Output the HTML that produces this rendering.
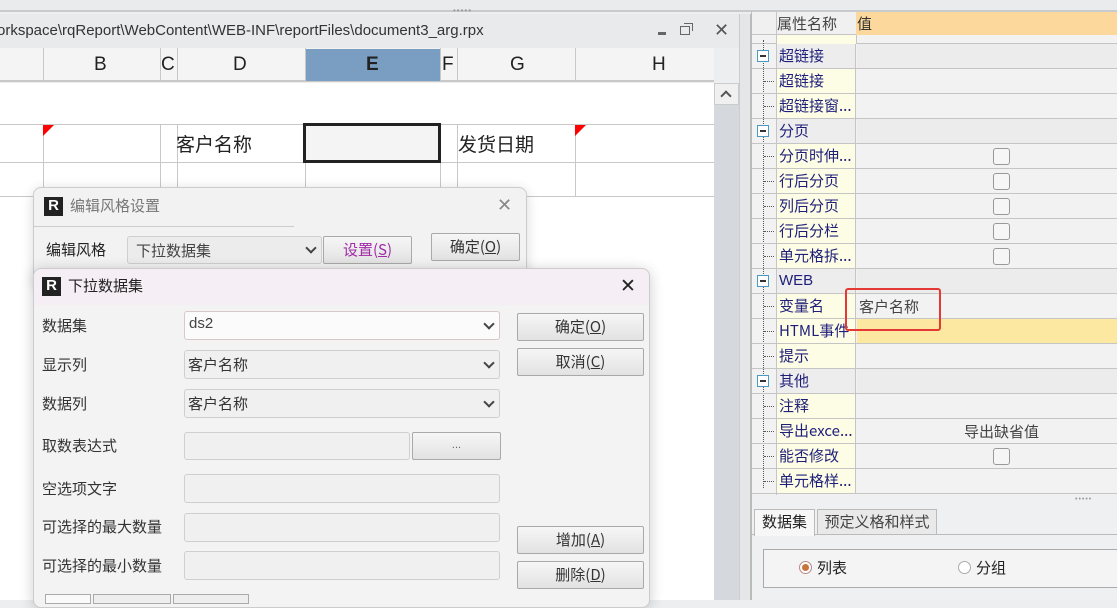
<!DOCTYPE html>
<html><head><meta charset="utf-8"><style>
*{box-sizing:border-box;margin:0;padding:0}
body{width:1117px;height:600px;overflow:hidden;position:relative;background:#eceef0;font-family:"Liberation Sans","Noto Sans CJK SC",sans-serif;font-size:15px;color:#222}
.a{position:absolute}
.cj{font-family:"Noto Sans CJK SC","WenQuanYi Zen Hei",sans-serif}
.vl{position:absolute;width:1px;background:#c8c8c8}
.hl{position:absolute;height:1px;background:#c8c8c8}
.btn{position:absolute;border:1px solid #a9a9a9;border-radius:2px;background:linear-gradient(#f6f6f6,#e2e2e2);text-align:center;font-size:15px;color:#333}
.inp{position:absolute;border:1px solid #cfcfcf;border-radius:3px;background:#f0f0f0}
.lbl{position:absolute;left:42px;font-size:15px;color:#333}
.chev{position:absolute;right:6px;top:8px;width:8px;height:8px;border-right:2px solid #444;border-bottom:2px solid #444;transform:rotate(45deg)}
.pr{position:absolute;left:752px;width:365px;height:25px;border-bottom:1px solid #c5c5c5}
.pr .n{position:absolute;left:24px;width:80px;top:0;height:24px;border-left:1px solid #c5c5c5;border-right:1px solid #c5c5c5;padding-left:2px;line-height:24px;color:#1f1f7a;font-size:15px;white-space:nowrap;overflow:hidden}
.pr .v{position:absolute;left:105px;right:0;top:0;height:24px;background:#f2f2f2}
.pr.c .n{background:#fdfde6}
.pr.g .n{background:#ededed}
.cb{position:absolute;left:136px;top:4px;width:17px;height:17px;border:1px solid #999;border-radius:3px;background:#f6f6f6}
.tr{position:absolute;left:12px;top:12px;width:10px;border-top:1px dotted #555}
.exp{position:absolute;left:5px;top:6px;width:12px;height:12px;border:1px solid #4a9ac2;background:#fff}
.exp:after{content:"";position:absolute;left:2px;top:4px;width:6px;height:2px;background:#333}
.logo{position:absolute;width:19px;height:19px;background:#222;color:#fff;font-weight:bold;font-size:15px;line-height:17px;text-align:center;font-family:"Liberation Sans",sans-serif}
</style></head><body>
<div class="a" style="left:0;top:0;width:1117px;height:12px;background:#e9ebed;border-bottom:2px solid #c8cbce"></div>
<div class="a" style="left:453px;top:6px;font-size:8px;color:#999;letter-spacing:1px">•••••</div>
<div class="a" style="left:0;top:14px;width:740px;height:34px;background:#e9eaec"></div>
<div class="a" style="left:-3px;top:22px;font-size:15px;color:#333;white-space:nowrap">orkspace\rqReport\WebContent\WEB-INF\reportFiles\document3_arg.rpx</div>
<div class="a" style="left:658px;top:32px;width:8px;height:3px;background:#666"></div>
<div class="a" style="left:680px;top:26px;width:10px;height:9px;border:1.5px solid #666"></div>
<div class="a" style="left:684px;top:23px;width:9px;height:8px;border-top:1.5px solid #666;border-right:1.5px solid #666"></div>
<div class="a" style="left:714px;top:20px;font-size:18px;color:#555">✕</div>
<div class="a" style="left:0;top:48px;width:714px;height:34px;background:#f4f4f4;border-bottom:2px solid #c8c8c8"></div>
<div class="a" style="left:306px;top:49px;width:134px;height:32px;background:#7a9ec2"></div>
<div class="vl" style="left:43px;top:48px;height:34px"></div>
<div class="vl" style="left:160px;top:48px;height:34px"></div>
<div class="vl" style="left:177px;top:48px;height:34px"></div>
<div class="vl" style="left:305px;top:48px;height:34px"></div>
<div class="vl" style="left:440px;top:48px;height:34px"></div>
<div class="vl" style="left:457px;top:48px;height:34px"></div>
<div class="vl" style="left:575px;top:48px;height:34px"></div>
<div class="a" style="left:94px;top:54px;font-size:19px">B</div>
<div class="a" style="left:161px;top:54px;font-size:19px">C</div>
<div class="a" style="left:233px;top:54px;font-size:19px">D</div>
<div class="a" style="left:366px;top:54px;font-size:19px;font-weight:bold">E</div>
<div class="a" style="left:442px;top:54px;font-size:19px">F</div>
<div class="a" style="left:510px;top:54px;font-size:19px">G</div>
<div class="a" style="left:652px;top:54px;font-size:19px">H</div>
<div class="a" style="left:0;top:83px;width:714px;height:517px;background:#fff"></div>
<div class="hl" style="left:0;top:124px;width:714px"></div>
<div class="hl" style="left:0;top:162px;width:714px"></div>
<div class="hl" style="left:0;top:196px;width:714px"></div>
<div class="vl" style="left:43px;top:124px;height:72px"></div>
<div class="vl" style="left:160px;top:124px;height:72px"></div>
<div class="vl" style="left:177px;top:124px;height:72px"></div>
<div class="vl" style="left:305px;top:124px;height:72px"></div>
<div class="vl" style="left:440px;top:124px;height:72px"></div>
<div class="vl" style="left:457px;top:124px;height:72px"></div>
<div class="vl" style="left:575px;top:124px;height:72px"></div>
<div class="a" style="left:43px;top:125px;width:0;height:0;border-top:11px solid #f00;border-right:11px solid transparent"></div>
<div class="a" style="left:575px;top:125px;width:0;height:0;border-top:11px solid #f00;border-right:11px solid transparent"></div>
<div class="a" style="left:303px;top:123px;width:138px;height:40px;border:3px solid #222;background:#f4f4f4"></div>
<div class="a cj" style="left:176px;top:130px;font-size:19px">客户名称</div>
<div class="a cj" style="left:458px;top:130px;font-size:19px">发货日期</div>
<div class="a" style="left:714px;top:83px;width:25px;height:517px;background:#d5d9dd"></div>
<div class="a" style="left:714px;top:83px;width:25px;height:22px;background:#f0f0f0;border:1px solid #ccc"></div>
<div class="a" style="left:722px;top:92px;width:8px;height:8px;border-left:2px solid #555;border-top:2px solid #555;transform:rotate(45deg)"></div>
<div class="a" style="left:739px;top:14px;width:12px;height:586px;background:#e4e6e8;border-left:1px solid #ccc;border-right:1px solid #bbb"></div>
<div class="a" style="left:33px;top:187px;width:494px;height:100px;background:#f2f2f2;border:1px solid #ccc;border-radius:8px;box-shadow:0 2px 12px rgba(0,0,0,.15)"></div>
<div class="logo" style="left:44px;top:197px">R</div>
<div class="a cj" style="left:70px;top:195px;font-size:15px;color:#777">编辑风格设置</div>
<div class="a" style="left:497px;top:195px;font-size:18px;color:#888">✕</div>
<div class="a" style="left:34px;top:226px;width:260px;height:0;border-top:1px solid #ccc"></div>
<div class="a cj" style="left:46px;top:239px;font-size:15px">编辑风格</div>
<div class="inp" style="left:127px;top:236px;width:195px;height:28px;background:#ececec"><span class="cj" style="position:absolute;left:8px;top:3px;font-size:15px;color:#444">下拉数据集</span><div class="chev" style="top:7px"></div></div>
<div class="btn cj" style="left:323px;top:236px;width:89px;height:28px;line-height:26px;color:#a02aa8">设置(<u>S</u>)</div>
<div class="btn cj" style="left:431px;top:233px;width:89px;height:28px;line-height:26px">确定(<u>O</u>)</div>
<div class="a" style="left:33px;top:268px;width:617px;height:340px;background:#f3f3f3;border:1px solid #ccc;border-radius:8px;box-shadow:0 2px 14px rgba(0,0,0,.2)"></div>
<div class="a" style="left:34px;top:269px;width:615px;height:36px;background:#f5eef4;border-radius:8px 8px 0 0"></div>
<div class="logo" style="left:42px;top:277px">R</div>
<div class="a cj" style="left:68px;top:275px;font-size:15px;color:#222">下拉数据集</div>
<div class="a" style="left:620px;top:275px;font-size:19px;color:#222">✕</div>
<div class="lbl cj" style="top:315px">数据集</div>
<div class="lbl cj" style="top:354px">显示列</div>
<div class="lbl cj" style="top:393px">数据列</div>
<div class="lbl cj" style="top:435px">取数表达式</div>
<div class="lbl cj" style="top:478px">空选项文字</div>
<div class="lbl cj" style="top:516px">可选择的最大数量</div>
<div class="lbl cj" style="top:555px">可选择的最小数量</div>
<div class="inp" style="left:184px;top:311px;width:316px;height:29px;background:#fbfbfb;border-color:#d8c8c8"><span style="position:absolute;left:4px;top:3px;font-size:15px;color:#444">ds2</span><div class="chev"></div></div>
<div class="inp" style="left:184px;top:350px;width:316px;height:29px"><span class="cj" style="position:absolute;left:3px;top:3px;font-size:15px;color:#333">客户名称</span><div class="chev"></div></div>
<div class="inp" style="left:184px;top:389px;width:316px;height:29px"><span class="cj" style="position:absolute;left:3px;top:3px;font-size:15px;color:#333">客户名称</span><div class="chev"></div></div>
<div class="inp" style="left:184px;top:432px;width:226px;height:28px"></div>
<div class="btn" style="left:412px;top:432px;width:89px;height:28px;line-height:24px;font-size:11px;color:#666">...</div>
<div class="inp" style="left:184px;top:474px;width:316px;height:29px"></div>
<div class="inp" style="left:184px;top:513px;width:316px;height:29px"></div>
<div class="inp" style="left:184px;top:551px;width:316px;height:29px"></div>
<div class="btn cj" style="left:517px;top:313px;width:127px;height:28px;line-height:26px">确定(<u>O</u>)</div>
<div class="btn cj" style="left:517px;top:348px;width:127px;height:28px;line-height:26px">取消(<u>C</u>)</div>
<div class="btn cj" style="left:517px;top:526px;width:127px;height:28px;line-height:26px">增加(<u>A</u>)</div>
<div class="btn cj" style="left:517px;top:561px;width:127px;height:28px;line-height:26px">删除(<u>D</u>)</div>
<div class="a" style="left:45px;top:594px;width:46px;height:10px;border:1px solid #aaa;background:#fafafa"></div>
<div class="a" style="left:93px;top:594px;width:78px;height:10px;border:1px solid #aaa;background:#eee"></div>
<div class="a" style="left:173px;top:594px;width:76px;height:10px;border:1px solid #aaa;background:#eee"></div>
<div class="a" style="left:751px;top:12px;width:366px;height:483px;background:#f2f2f2;border-left:1px solid #bbb"></div>
<div class="a" style="left:752px;top:12px;width:365px;height:23px;background:#f0f0f0;border-bottom:1px solid #c5c5c5"></div>
<div class="a" style="left:856px;top:12px;width:261px;height:23px;background:#fcd89c"></div>
<div class="a cj" style="left:777px;top:13px;font-size:15px;color:#444">属性名称</div>
<div class="a cj" style="left:857px;top:13px;font-size:15px;color:#333">值</div>
<div class="a" style="left:752px;top:35px;width:365px;height:9px;background:#f2f2f2;border-bottom:1px solid #c5c5c5"><div style="position:absolute;left:24px;width:81px;height:9px;background:#fdfde6;border-left:1px solid #c5c5c5;border-right:1px solid #c5c5c5"></div></div>
<div class="vl" style="left:776px;top:12px;height:483px;background:#c5c5c5"></div>
<div class="a" style="left:763px;top:40px;height:448px;border-left:1px dotted #555"></div>

<div class="pr g" style="top:44px"><div class="exp"></div><div class="n cj">超链接</div><div class="v" style="background:#ececec"></div></div>
<div class="pr c" style="top:69px"><div class="tr"></div><div class="n cj">超链接</div><div class="v"></div></div>
<div class="pr c" style="top:94px"><div class="tr"></div><div class="n cj">超链接窗...</div><div class="v"></div></div>
<div class="pr g" style="top:119px"><div class="exp"></div><div class="n cj">分页</div><div class="v" style="background:#ececec"></div></div>
<div class="pr c" style="top:144px"><div class="tr"></div><div class="n cj">分页时伸...</div><div class="v"><div class="cb"></div></div></div>
<div class="pr c" style="top:169px"><div class="tr"></div><div class="n cj">行后分页</div><div class="v"><div class="cb"></div></div></div>
<div class="pr c" style="top:194px"><div class="tr"></div><div class="n cj">列后分页</div><div class="v"><div class="cb"></div></div></div>
<div class="pr c" style="top:219px"><div class="tr"></div><div class="n cj">行后分栏</div><div class="v"><div class="cb"></div></div></div>
<div class="pr c" style="top:244px"><div class="tr"></div><div class="n cj">单元格拆...</div><div class="v"><div class="cb"></div></div></div>
<div class="pr g" style="top:269px"><div class="exp"></div><div class="n">WEB</div><div class="v" style="background:#ececec"></div></div>
<div class="pr c" style="top:294px"><div class="tr"></div><div class="n cj">变量名</div><div class="v"><span class="cj" style="position:absolute;left:2px;top:2px;font-size:15px;color:#444">客户名称</span></div></div>
<div class="pr c" style="top:319px"><div class="tr"></div><div class="n cj">HTML事件</div><div class="v" style="background:#fde8a2"></div></div>
<div class="pr c" style="top:344px"><div class="tr"></div><div class="n cj">提示</div><div class="v"></div></div>
<div class="pr g" style="top:369px"><div class="exp"></div><div class="n cj">其他</div><div class="v" style="background:#ececec"></div></div>
<div class="pr c" style="top:394px"><div class="tr"></div><div class="n cj">注释</div><div class="v"></div></div>
<div class="pr c" style="top:419px"><div class="tr"></div><div class="n cj">导出exce...</div><div class="v"><span class="cj" style="position:absolute;left:107px;top:2px;font-size:15px;color:#444">导出缺省值</span></div></div>
<div class="pr c" style="top:444px"><div class="tr"></div><div class="n cj">能否修改</div><div class="v"><div class="cb"></div></div></div>
<div class="pr c" style="top:469px"><div class="tr"></div><div class="n cj">单元格样...</div><div class="v"></div></div>
<div class="a" style="left:845px;top:288px;width:96px;height:43px;border:2px solid #e53935;border-radius:3px"></div>
<div class="a" style="left:751px;top:495px;width:366px;height:105px;background:#eef0f2;border-left:1px solid #bbb"></div>
<div class="a" style="left:1075px;top:496px;font-size:7px;color:#999;letter-spacing:1px">•••••</div>
<div class="a" style="left:752px;top:534px;width:365px;height:1px;background:#bbb"></div>
<div class="a cj" style="left:754px;top:509px;width:61px;height:27px;border:1px solid #bbb;border-bottom:none;background:#f7f7f7;text-align:center;line-height:24px;font-size:15px">数据集</div>
<div class="a cj" style="left:817px;top:509px;width:120px;height:25px;border:1px solid #bbb;border-bottom:none;background:#e9e9e9;text-align:center;line-height:24px;font-size:15px;color:#444">预定义格和样式</div>
<div class="a" style="left:763px;top:549px;width:360px;height:39px;border:1px solid #aaa;background:#f4f4f4"></div>
<div class="a" style="left:799px;top:561px;width:13px;height:13px;border-radius:50%;border:1px solid #b88;background:#fff"><div style="position:absolute;left:2px;top:2px;width:7px;height:7px;border-radius:50%;background:#c8743c"></div></div>
<div class="a cj" style="left:817px;top:557px;font-size:15px">列表</div>
<div class="a" style="left:958px;top:561px;width:13px;height:13px;border-radius:50%;border:1px solid #aaa;background:#fff"></div>
<div class="a cj" style="left:976px;top:557px;font-size:15px">分组</div>
</body></html>
